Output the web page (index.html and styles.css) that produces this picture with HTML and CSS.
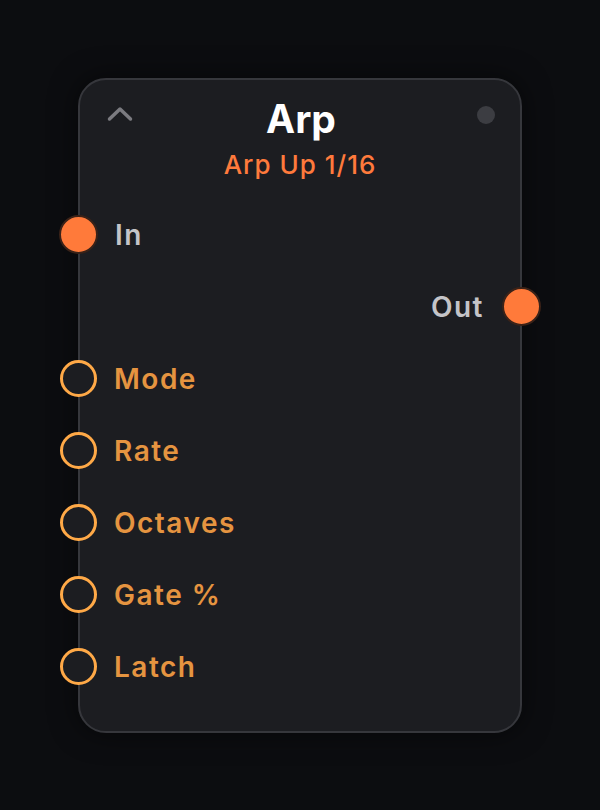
FILE: index.html
```html
<!DOCTYPE html>
<html lang="en">
<head>
  <meta charset="UTF-8">
  <meta name="viewport" content="width=device-width, initial-scale=1.0">
  <title>Arp</title>
  <link rel="stylesheet" href="styles.css">
</head>
<body>

<div class="node">
  <div class="node-head">
    <button class="collapse" aria-label="Collapse">
      <svg width="26" height="16" viewBox="0 0 26 16">
        <polyline points="2.5,13 13,3 23.5,13" fill="none" stroke="currentColor" stroke-width="3.5" stroke-linecap="round" stroke-linejoin="round"/>
      </svg>
    </button>
    <h1>Arp</h1>
    <span class="status"></span>
  </div>
  <div class="subtitle">Arp Up 1/16</div>

  <div class="ports">
    <div class="port in">
      <span class="jack filled"></span>
      <span class="label">In</span>
    </div>
    <div class="port out">
      <span class="label">Out</span>
      <span class="jack filled"></span>
    </div>
    <div class="port param">
      <span class="jack ring"></span>
      <span class="label">Mode</span>
    </div>
    <div class="port param">
      <span class="jack ring"></span>
      <span class="label">Rate</span>
    </div>
    <div class="port param">
      <span class="jack ring"></span>
      <span class="label">Octaves</span>
    </div>
    <div class="port param">
      <span class="jack ring"></span>
      <span class="label">Gate %</span>
    </div>
    <div class="port param">
      <span class="jack ring"></span>
      <span class="label">Latch</span>
    </div>
  </div>
</div>

</body>
</html>
```

FILE: styles.css
```css
* {
  box-sizing: border-box;
}

body {
  font-family: Inter, 'Noto Sans', sans-serif;
  background: #0c0d10;
  margin: 0;
  min-height: 100vh;
  display: flex;
  justify-content: center;
  align-items: center;
}

.node {
  width: 444px;
  background: #1c1d21;
  border: 2px solid #36373c;
  border-radius: 28px;
  box-shadow: 0 0 28px rgba(0,0,0,0.55);
  padding: 17px 0 28px;
}

.node-head {
  display: grid;
  grid-template-columns: 1fr auto 1fr;
  align-items: center;
  padding: 0 25px 0 27px;
}

.collapse {
  justify-self: start;
  background: none;
  border: none;
  padding: 0;
  color: #7b7b80;
  display: flex;
  margin-top: -10px;
}

h1 {
  margin: 0;
  font-size: 39px;
  line-height: 44px;
  font-weight: 700;
  color: #ffffff;
}

.status {
  justify-self: end;
  width: 18px;
  height: 18px;
  border-radius: 50%;
  background: #3c3d42;
  margin-top: -8px;
}

.subtitle {
  margin-top: 8px;
  text-align: center;
  font-size: 26px;
  line-height: 32px;
  font-weight: 500;
  letter-spacing: 1px;
  color: #ff7a3c;
}

.ports {
  margin-top: 18px;
  display: flex;
  flex-direction: column;
}

.port {
  height: 72px;
  display: flex;
  align-items: center;
  gap: 17px;
}

.port.out {
  justify-content: flex-end;
  gap: 18px;
}

.label {
  font-size: 28px;
  font-weight: 600;
  letter-spacing: 1.5px;
}

.in .label,
.out .label {
  color: #c4c4c8;
}

.param .label {
  color: #e59440;
}

.jack {
  flex: 0 0 auto;
  border-radius: 50%;
}

.jack.filled {
  width: 39px;
  height: 39px;
  background: #ff7a3a;
  border: 2px solid #3a2218;
}

.in .jack {
  margin-left: -21px;
}

.out .jack {
  margin-right: -21px;
}

.jack.ring {
  width: 37px;
  height: 37px;
  border: 3.5px solid #ffa947;
  background: #1c1d21;
  margin-left: -20px;
}
```
